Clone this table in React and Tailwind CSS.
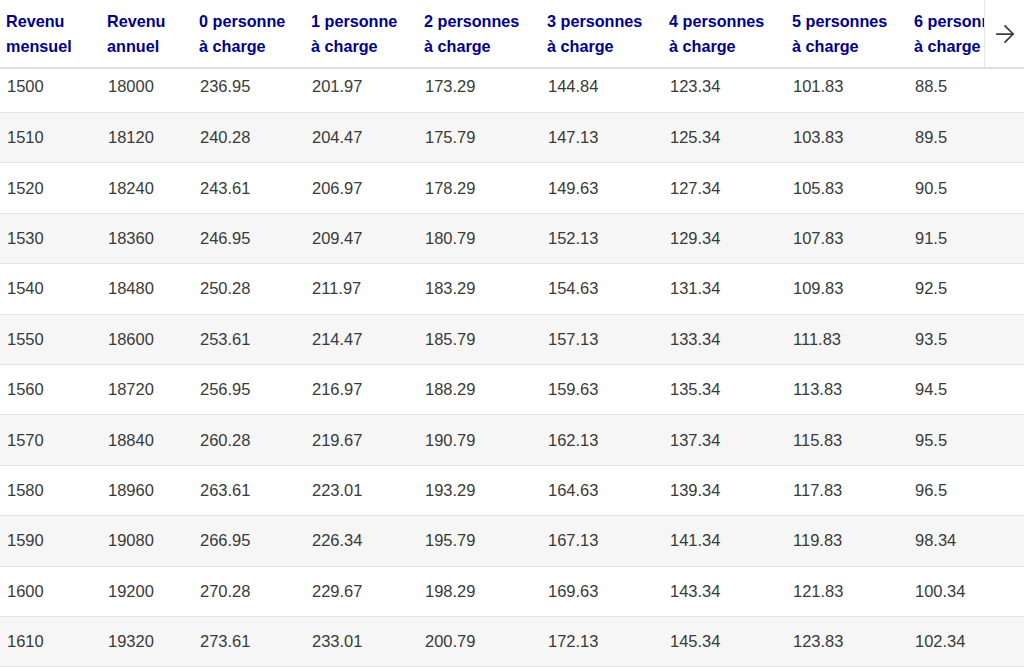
import React from "react";
import { ArrowRight } from "lucide-react";

const widths = ["w-[101px]", "w-[92px]", "w-[112px]", "w-[113px]", "w-[123px]", "w-[122px]", "w-[123px]", "w-[122px]", "w-[130px]"];

const headers = [
  ["Revenu", "mensuel"],
  ["Revenu", "annuel"],
  ["0 personne", "à charge"],
  ["1 personne", "à charge"],
  ["2 personnes", "à charge"],
  ["3 personnes", "à charge"],
  ["4 personnes", "à charge"],
  ["5 personnes", "à charge"],
  ["6 personnes", "à charge"],
];

const rows = [
  ["1500", "18000", "236.95", "201.97", "173.29", "144.84", "123.34", "101.83", "88.5"],
  ["1510", "18120", "240.28", "204.47", "175.79", "147.13", "125.34", "103.83", "89.5"],
  ["1520", "18240", "243.61", "206.97", "178.29", "149.63", "127.34", "105.83", "90.5"],
  ["1530", "18360", "246.95", "209.47", "180.79", "152.13", "129.34", "107.83", "91.5"],
  ["1540", "18480", "250.28", "211.97", "183.29", "154.63", "131.34", "109.83", "92.5"],
  ["1550", "18600", "253.61", "214.47", "185.79", "157.13", "133.34", "111.83", "93.5"],
  ["1560", "18720", "256.95", "216.97", "188.29", "159.63", "135.34", "113.83", "94.5"],
  ["1570", "18840", "260.28", "219.67", "190.79", "162.13", "137.34", "115.83", "95.5"],
  ["1580", "18960", "263.61", "223.01", "193.29", "164.63", "139.34", "117.83", "96.5"],
  ["1590", "19080", "266.95", "226.34", "195.79", "167.13", "141.34", "119.83", "98.34"],
  ["1600", "19200", "270.28", "229.67", "198.29", "169.63", "143.34", "121.83", "100.34"],
  ["1610", "19320", "273.61", "233.01", "200.79", "172.13", "145.34", "123.83", "102.34"],
];

export default function App() {
  return (
    <div className="relative w-[1024px] h-[669px] overflow-hidden bg-white font-['Liberation_Sans',Arial,sans-serif]">
      <div className="flex flex-col w-max min-w-full">
        <div className="flex h-[69px] border-b-2 border-[#dddddd] bg-white">
          {headers.map((h, i) => (
            <div key={i} className={`${widths[i]} shrink-0 pl-[6px] flex flex-col justify-center text-[16.2px] leading-[25px] font-bold text-[#000091] whitespace-nowrap`}>
              <span>{h[0]}</span>
              <span>{h[1]}</span>
            </div>
          ))}
        </div>
        {rows.map((r, ri) => (
          <div
            key={ri}
            className={`flex border-b border-[#e5e5e5] ${ri === 0 ? "h-[44px] pb-[8px]" : "h-[50.4px]"} ${ri % 2 === 1 ? "bg-[#f6f6f6]" : "bg-white"}`}
          >
            {r.map((c, ci) => (
              <div key={ci} className={`${widths[ci]} shrink-0 pl-[7px] flex items-center text-[16.5px] text-[#3a3a3a] whitespace-nowrap`}>
                {c}
              </div>
            ))}
          </div>
        ))}
      </div>
      <div className="absolute right-0 top-0 w-[40px] h-[67px] bg-white border-l border-[#e5e5e5] flex items-center justify-center">
        <ArrowRight size={28} strokeWidth={1.5} className="text-[#3a3a3a]" />
      </div>
    </div>
  );
}
